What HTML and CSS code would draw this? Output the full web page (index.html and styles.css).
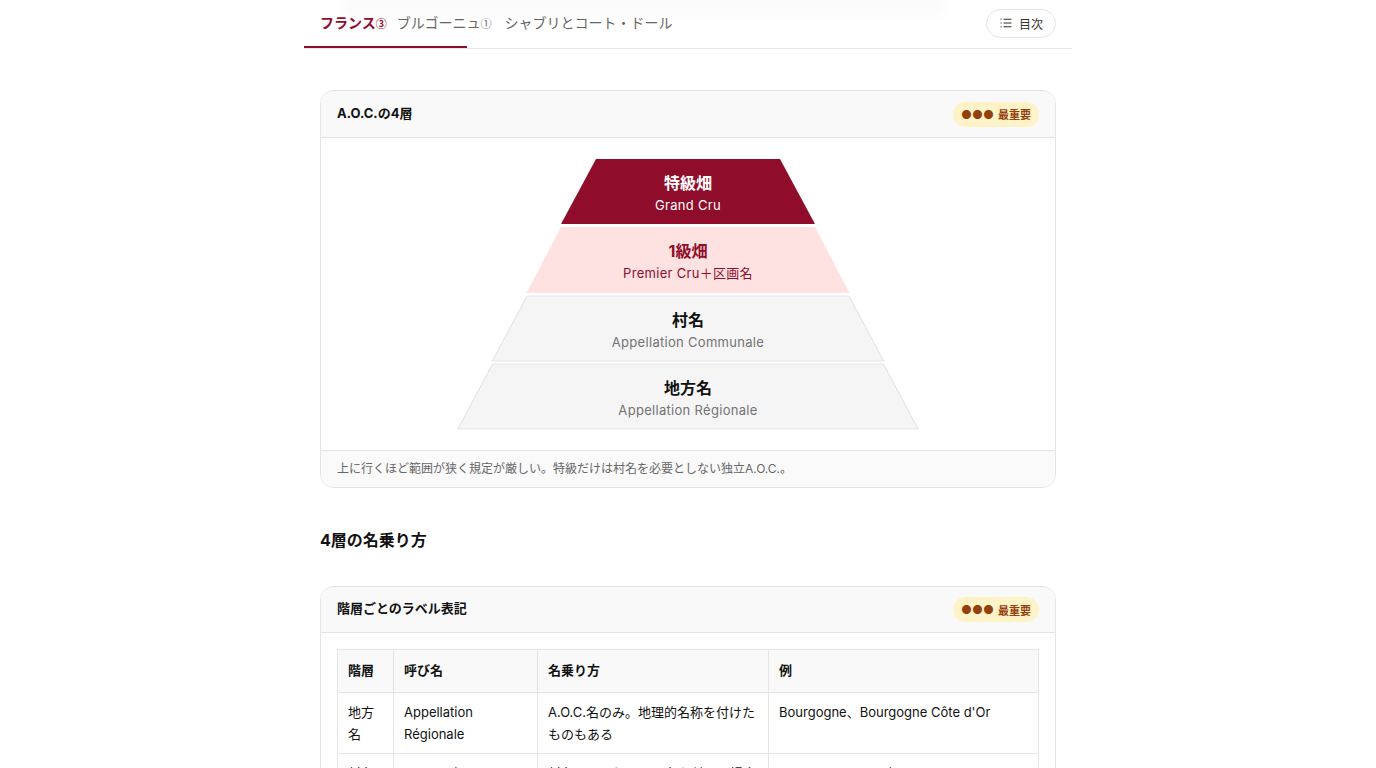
FILE: index.html
```html
<!DOCTYPE html>
<html lang="ja">
<head>
    <meta charset="UTF-8">
    <title>A.O.C.の4層</title>
    <link rel="stylesheet" href="styles.css">
</head>
<body>
    <div class="page">
        <div class="tabs">
            <div class="tab-list">
                <a class="tab active">フランス<span class="num">③</span></a>
                <a class="tab">ブルゴーニュ<span class="num">①</span></a>
                <a class="tab third">シャブリとコート・ドール</a>
            </div>
            <button class="toc-btn">
                <svg width="14" height="14" viewBox="0 0 14 14" fill="none" stroke="#333" stroke-width="1.1">
                    <path d="M4.5 3.2H12.5M4.5 7H12.5M4.5 10.8H12.5"/>
                    <path d="M1.5 3.2H2.6M1.5 7H2.6M1.5 10.8H2.6"/>
                </svg>
                目次
            </button>
            <span class="tab-line"></span>
        </div>

        <main class="content">
            <section class="card">
                <div class="card-head">
                    <h3>A.O.C.の4層</h3>
                    <span class="badge"><span class="dots">●●●</span>最重要</span>
                </div>
                <div class="pyramid-wrap">
                    <svg class="pyramid" width="462" height="272" viewBox="0 0 462 272">
                        <polygon class="tier-top" points="139,1 323,1 358,66 104,66"/>
                        <text class="tier-name name-white" x="231" y="31">特級畑</text>
                        <text class="tier-sub sub-white" x="231" y="52">Grand Cru</text>

                        <polygon class="tier-first" points="104,69 358,69 392.5,135 69.5,135"/>
                        <text class="tier-name name-wine" x="231" y="99">1級畑</text>
                        <text class="tier-sub sub-wine" x="231" y="120">Premier Cru＋区画名</text>

                        <polygon class="tier-plain" points="70,138 392,138 426.5,203 35.5,203"/>
                        <text class="tier-name" x="231" y="168">村名</text>
                        <text class="tier-sub" x="231" y="189">Appellation Communale</text>

                        <polygon class="tier-plain" points="35.5,206 426.5,206 461,271 1,271"/>
                        <text class="tier-name" x="231" y="236">地方名</text>
                        <text class="tier-sub" x="231" y="257">Appellation Régionale</text>
                    </svg>
                </div>
                <div class="card-foot">上に行くほど範囲が狭く規定が厳しい。特級だけは村名を必要としない独立A.O.C.。</div>
            </section>

            <h2>4層の名乗り方</h2>

            <section class="card table-card">
                <div class="card-head">
                    <h3>階層ごとのラベル表記</h3>
                    <span class="badge"><span class="dots">●●●</span>最重要</span>
                </div>
                <div class="table-wrap">
                    <table>
                        <thead>
                            <tr>
                                <th class="col-tier">階層</th>
                                <th class="col-name">呼び名</th>
                                <th class="col-how">名乗り方</th>
                                <th>例</th>
                            </tr>
                        </thead>
                        <tbody>
                            <tr>
                                <td>地方名</td>
                                <td>Appellation Régionale</td>
                                <td>A.O.C.名のみ。地理的名称を付けたものもある</td>
                                <td>Bourgogne、Bourgogne Côte d'Or</td>
                            </tr>
                            <tr>
                                <td>村名</td>
                                <td>Appellation Communale</td>
                                <td>村名のみ。畑の区画名を付ける場合もある</td>
                                <td>Gevrey-Chambertin</td>
                            </tr>
                        </tbody>
                    </table>
                </div>
            </section>
        </main>
    </div>
</body>
</html>
```

FILE: styles.css
```css
* {
  box-sizing: border-box;
}

html, body {
  height: 768px;
  overflow: hidden;
}

body {
  margin: 0;
  background-color: #fff;
  color: #111;
  font-family: Inter, "Noto Sans CJK JP", sans-serif;
}

.page {
  width: 768px;
  margin: 0 auto;
}

.tabs {
  position: relative;
  z-index: 0;
  display: flex;
  justify-content: space-between;
  align-items: center;
  height: 49px;
  padding: 0 16px 1px;
  border-bottom: 1px solid #e8e8e8;
}

.tabs::before {
  content: "";
  position: absolute;
  z-index: -1;
  top: -6px;
  left: 40px;
  width: 600px;
  height: 22px;
  background-color: #fafafa;
  filter: blur(6px);
}

.tab-list {
  display: flex;
  gap: 10px;
  padding-bottom: 2px;
}

.tab {
  font-family: "Noto Sans CJK JP", sans-serif;
  font-size: 14px;
  line-height: 19px;
  color: #666;
}

.tab.active {
  color: #8f0d2a;
  font-weight: 700;
}

.tab.third {
  margin-left: 3px;
}

.num {
  font-size: 11px;
}

.tab-line {
  position: absolute;
  left: 0;
  bottom: 0;
  width: 163px;
  height: 2px;
  background-color: #8f0d2a;
}

.toc-btn {
  display: flex;
  align-items: center;
  gap: 6px;
  height: 29px;
  margin-bottom: 1px;
  padding: 0 12px;
  border: 1px solid #e5e5e5;
  border-radius: 15px;
  background-color: #fff;
  color: #333;
  font-family: inherit;
  font-size: 12px;
}

.content {
  padding: 41px 16px 0;
}

.card {
  border: 1px solid #e5e5e5;
  border-radius: 14px;
  overflow: hidden;
}

.card-head {
  display: flex;
  justify-content: space-between;
  align-items: center;
  height: 47px;
  padding: 0 16px;
  background-color: #f9f9f9;
  border-bottom: 1px solid #e5e5e5;
}

.table-card .card-head {
  height: 46px;
}

.card-head h3 {
  margin: 0 0 4px;
  font-size: 13px;
  font-weight: 700;
}

.badge {
  display: flex;
  align-items: center;
  gap: 4px;
  height: 25px;
  padding: 0 8px;
  border-radius: 13px;
  background-color: #fef3c7;
  color: #92400e;
  font-size: 11px;
  font-weight: 700;
}

.dots {
  font-size: 12px;
}

.pyramid-wrap {
  display: flex;
  justify-content: center;
  padding: 20px 0;
  height: 312px;
}

.pyramid {
  display: block;
}

.tier-top {
  fill: #8f0d2a;
}

.tier-first {
  fill: #fee2e2;
}

.tier-plain {
  fill: #f5f5f5;
  stroke: #e5e5e5;
  stroke-width: 1.2;
}

.tier-name {
  font-size: 16px;
  font-weight: 700;
  text-anchor: middle;
  fill: #111;
}

.tier-sub {
  font-size: 13px;
  letter-spacing: 0.3px;
  text-anchor: middle;
  fill: #737373;
}

.name-white, .sub-white {
  fill: #fff;
}

.name-wine, .sub-wine {
  fill: #8f0d2a;
}

.card-foot {
  height: 37px;
  padding: 0 16px;
  border-top: 1px solid #e5e5e5;
  background-color: #fafafa;
  color: #666;
  font-size: 12px;
  line-height: 35px;
}

h2 {
  margin: 40px 0 34px;
  font-size: 16px;
  line-height: 24px;
  font-weight: 700;
}

.table-wrap {
  padding: 16px;
}

table {
  width: 100%;
  border-collapse: collapse;
  table-layout: fixed;
  font-size: 13px;
  line-height: 22px;
}

th, td {
  padding: 8px 10px;
  border: 1px solid #e5e5e5;
  text-align: left;
  vertical-align: top;
}

th {
  padding: 9px 10px 11px;
  background-color: #f9f9f9;
  font-weight: 700;
}

.col-tier {
  width: 56px;
}

.col-name {
  width: 144px;
}

.col-how {
  width: 231px;
}
```
